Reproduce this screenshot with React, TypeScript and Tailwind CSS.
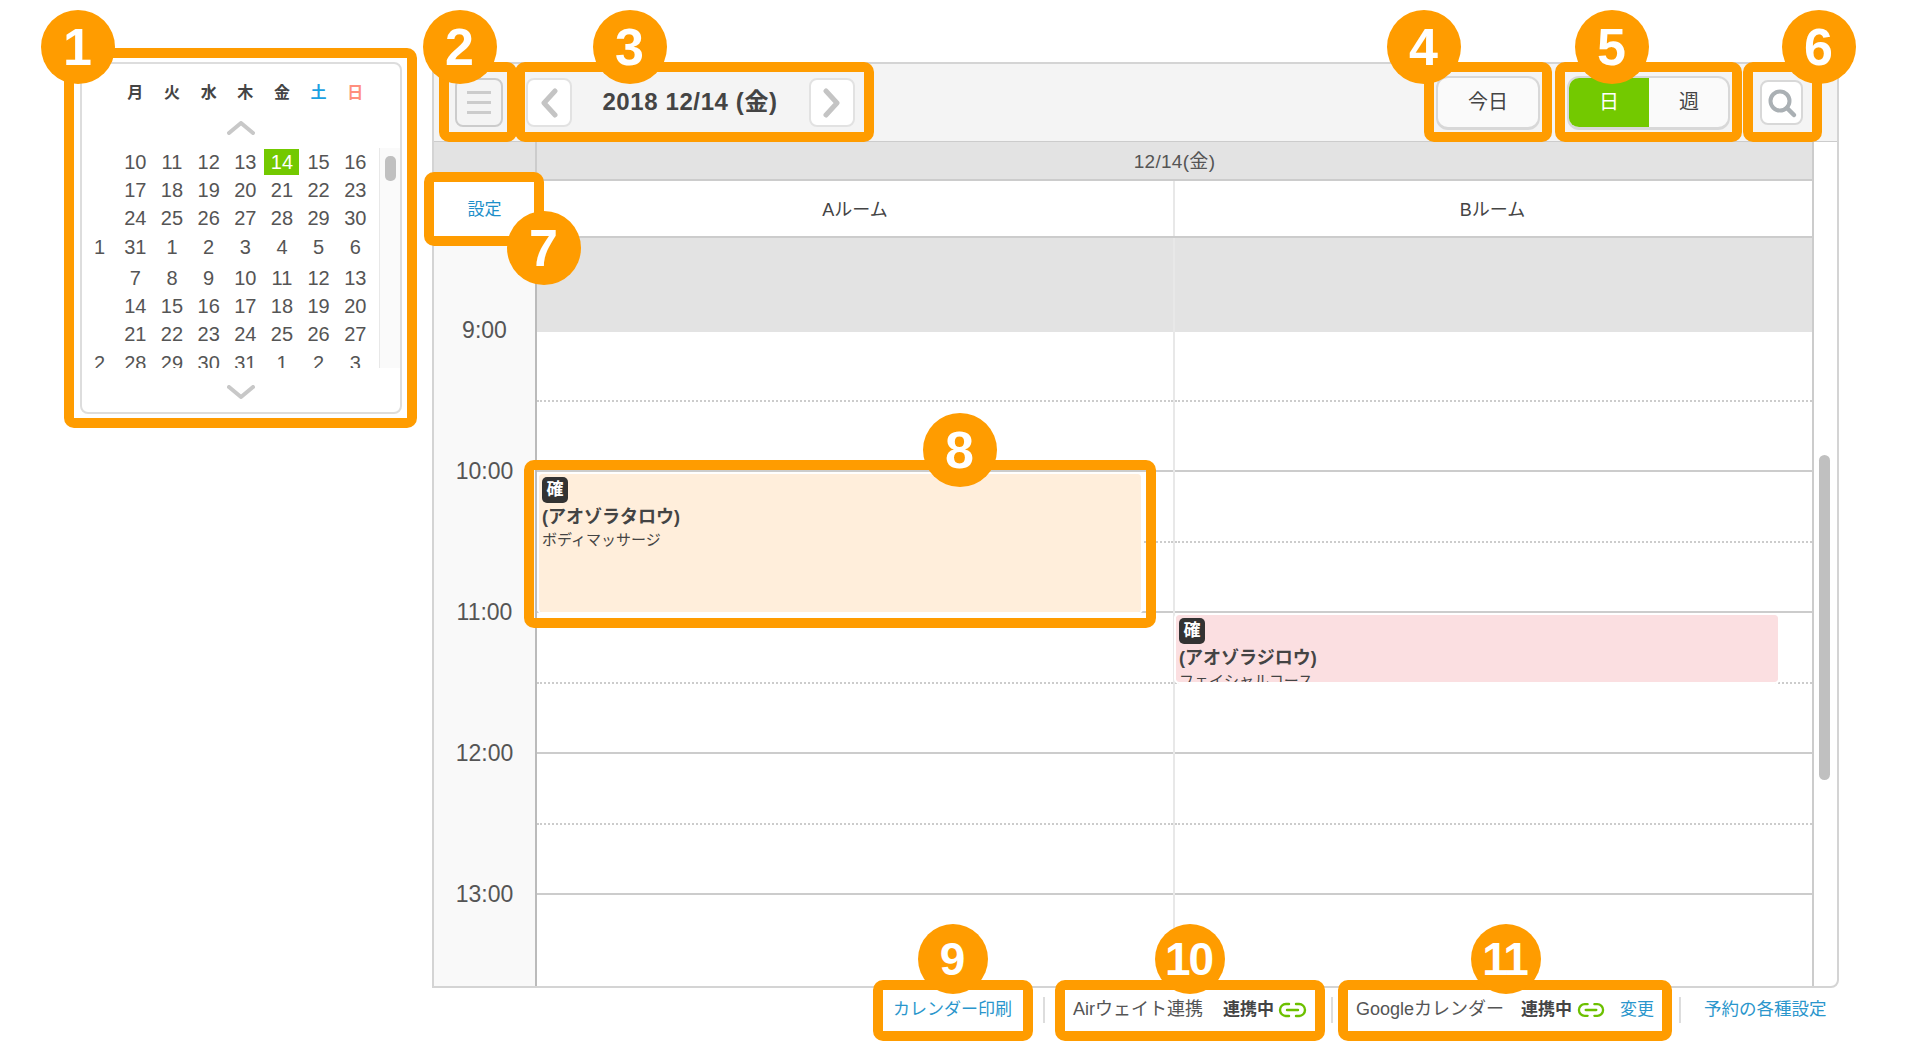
const weekdays = [
  { label: "月", color: "text-[#444]" },
  { label: "火", color: "text-[#444]" },
  { label: "水", color: "text-[#444]" },
  { label: "木", color: "text-[#444]" },
  { label: "金", color: "text-[#444]" },
  { label: "土", color: "text-[#1ba1e2]" },
  { label: "日", color: "text-[#ff8f7e]" },
];

const calendarRows = [
  { week: "", height: "h-[28px]", days: [10, 11, 12, 13, 14, 15, 16] },
  { week: "", height: "h-[28px]", days: [17, 18, 19, 20, 21, 22, 23] },
  { week: "", height: "h-[28px]", days: [24, 25, 26, 27, 28, 29, 30] },
  { week: "1", height: "h-[32px] pb-[2px]", days: [31, 1, 2, 3, 4, 5, 6] },
  { week: "", height: "h-[28px]", days: [7, 8, 9, 10, 11, 12, 13] },
  { week: "", height: "h-[28px]", days: [14, 15, 16, 17, 18, 19, 20] },
  { week: "", height: "h-[28px]", days: [21, 22, 23, 24, 25, 26, 27] },
  { week: "2", height: "h-[30px]", days: [28, 29, 30, 31, 1, 2, 3] },
];

const hours = ["9:00", "10:00", "11:00", "12:00", "13:00"];

function Chevron({ dir }: { dir: "up" | "down" }) {
  return (
    <svg width="28" height="14" viewBox="0 0 28 14" className="mx-auto block">
      <path
        d={dir === "up" ? "M2 12 14 2 26 12" : "M2 2 14 12 26 2"}
        fill="none"
        stroke="#c8c8c8"
        strokeWidth="4"
        strokeLinecap="round"
        strokeLinejoin="round"
      />
    </svg>
  );
}

function MiniCalendar() {
  return (
    <div className="ml-[80px] mt-[62px] w-[322px] h-[352px] shrink-0 border-2 border-[#ddd] rounded-lg">
      <div className="mt-[19px] h-[20px] pl-[35px] flex">
        {weekdays.map((d) => (
          <div key={d.label} className={`w-[36.67px] text-center text-[16px] leading-[20px] font-bold ${d.color}`}>
            {d.label}
          </div>
        ))}
      </div>
      <div className="mt-[18px] h-[14px]">
        <Chevron dir="up" />
      </div>
      <div className="mt-[13px] h-[220px] overflow-hidden flex">
        <div className="w-[297px]">
          {calendarRows.map((row, i) => (
            <div key={i} className={`flex items-center ${row.height}`}>
              <div className="w-[35px] text-center text-[20px] text-[#555]">{row.week}</div>
              {row.days.map((day, j) => (
                <div
                  key={j}
                  className={
                    i === 0 && j === 4
                      ? "w-[35px] mx-[0.83px] h-[26px] leading-[26px] text-center text-[20px] text-white bg-[#73c900]"
                      : "w-[36.67px] text-center text-[20px] text-[#555]"
                  }
                >
                  {day}
                </div>
              ))}
            </div>
          ))}
        </div>
        <div className="flex-1 border-l border-[#e8e8e8] bg-[#fafafa] pt-[8px] pl-[5px]">
          <div className="w-[11px] h-[25px] rounded-[5px] bg-[#c0c0c0]" />
        </div>
      </div>
      <div className="mt-[17px] h-[14px]">
        <Chevron dir="down" />
      </div>
    </div>
  );
}

function NavButton({ dir }: { dir: "prev" | "next" }) {
  return (
    <div className="w-[46px] h-[49px] flex items-center justify-center bg-white border-2 border-[#e2e2e2] rounded-lg">
      <svg width="18" height="30" viewBox="0 0 18 30">
        <path
          d={dir === "prev" ? "M15 3 4 15 15 27" : "M3 3 14 15 3 27"}
          fill="none"
          stroke="#c4c4c4"
          strokeWidth="5"
          strokeLinecap="round"
          strokeLinejoin="round"
        />
      </svg>
    </div>
  );
}

function Toolbar() {
  return (
    <div className="h-[78px] flex items-center bg-[#f4f4f4] border-b border-[#ccc]">
      <div className="ml-[21px] w-[48px] h-[49px] flex flex-col items-center justify-center gap-[7px] border-2 border-[#ccc] rounded-lg">
        <div className="w-[24px] h-[3px] bg-[#ccc]" />
        <div className="w-[24px] h-[3px] bg-[#ccc]" />
        <div className="w-[24px] h-[3px] bg-[#ccc]" />
      </div>
      <div className="ml-[23px]">
        <NavButton dir="prev" />
      </div>
      <div className="w-[237px] pb-[2px] pr-[1px] text-center text-[24px] tracking-[0.6px] font-bold text-[#444]">2018 12/14 (金)</div>
      <NavButton dir="next" />
      <div className="ml-auto w-[104px] h-[54px] flex items-center justify-center bg-[#fafafa] border-2 border-b-[3px] border-[#d8d8d8] rounded-xl text-[20px] text-[#444]">
        今日
      </div>
      <div className="ml-[27px] w-[163px] h-[54px] flex overflow-hidden bg-[#fafafa] border-2 border-b-[3px] border-[#d8d8d8] rounded-xl text-[20px]">
        <div className="w-[80px] flex items-center justify-center bg-[#73c900] text-white">日</div>
        <div className="flex-1 flex items-center justify-center pl-[1px] text-[#444]">週</div>
      </div>
      <div className="ml-[30px] mr-[34px] w-[43px] h-[45px] flex items-center justify-center bg-white border-2 border-[#d8d8d8] rounded-lg">
        <svg width="32" height="32" viewBox="0 0 32 32">
          <circle cx="14" cy="14" r="9.5" fill="none" stroke="#aab0b4" strokeWidth="4" />
          <path d="M21 21 28 28" stroke="#aab0b4" strokeWidth="4.5" strokeLinecap="round" />
        </svg>
      </div>
    </div>
  );
}

function HourRows() {
  return (
    <>
      <div className="h-[94px] bg-[#e3e3e3]" />
      <div className="h-[138px]">
        <div className="h-[70px] border-b-2 border-dotted border-[#ccc]" />
      </div>
      {[0, 1, 2].map((h) => (
        <div key={h} className="h-[141px] border-t-2 border-[#ccc]">
          <div className="h-[71px] border-b-2 border-dotted border-[#ccc]" />
        </div>
      ))}
      <div className="h-[100px] border-t-2 border-[#ccc]" />
    </>
  );
}

function EventCard({
  name,
  menu,
  className,
}: {
  name: string;
  menu: string;
  className: string;
}) {
  return (
    <div className={`absolute overflow-hidden rounded-[3px] pl-[3px] pt-[3px] outline-2 outline-white ${className}`}>
      <div className="w-[26px] h-[26px] rounded-[5px] bg-[#333] text-white text-[17px] font-bold leading-[26px] text-center">
        確
      </div>
      <div className="mt-[4px] text-[18px] leading-[20px] font-bold text-[#444] whitespace-nowrap">{name}</div>
      <div className="mt-[3px] text-[15px] leading-[20px] text-[#444] whitespace-nowrap">{menu}</div>
    </div>
  );
}

function Schedule() {
  return (
    <div className="flex-1 min-h-0 flex">
      <div className="w-[1380px] flex flex-col">
        <div className="h-[39px] grid grid-cols-[103px_1275px] bg-[#e3e3e3] border-b-2 border-[#ccc] border-r-2">
          <div className="border-r-2 border-[#ccc]" />
          <div className="text-center text-[19px] tracking-[0.3px] leading-[39px] text-[#555]">12/14(金)</div>
        </div>
        <div className="h-[57px] grid grid-cols-[103px_638px_639px] border-b-2 border-[#ccc] text-[18px] text-[#444]">
          <div className="flex items-center justify-center pt-[3px] text-[17px] text-[#1d8fc9] border-r-2 border-[#ccc]">設定</div>
          <div className="flex items-center justify-center pt-[3px] border-r-2 border-[#e8e8e8]">Aルーム</div>
          <div className="flex items-center justify-center pt-[3px] pr-[2px] border-r-2 border-[#ccc]">Bルーム</div>
        </div>
        <div className="flex-1 min-h-0 overflow-hidden grid grid-cols-[103px_638px_639px]">
          <div className="pt-[22px] bg-[#f9f9f9] border-r-2 border-[#bbb]">
            {hours.map((h) => (
              <div key={h} className="h-[141px] flex items-center justify-center text-[23px] text-[#555]">
                {h}
              </div>
            ))}
          </div>
          <div className="relative border-r-2 border-[#e8e8e8]">
            <HourRows />
            <EventCard
              name="(アオゾラタロウ)"
              menu="ボディマッサージ"
              className="left-[2px] top-[236px] w-[602px] h-[138px] bg-[#ffeedb]"
            />
          </div>
          <div className="relative border-r-2 border-[#ccc]">
            <HourRows />
            <EventCard
              name="(アオゾラジロウ)"
              menu="フェイシャルコース"
              className="left-[1px] top-[377px] w-[602px] h-[67px] bg-[#fbdfe1]"
            />
          </div>
        </div>
      </div>
      <div className="flex-1 pt-[313px] pl-[5px]">
        <div className="w-[11px] h-[325px] rounded-[6px] bg-[#c0c0c0]" />
      </div>
    </div>
  );
}

function LinkIcon({ width }: { width: number }) {
  return (
    <svg width={width} height="16" viewBox="0 0 29 16" className="ml-[4px]">
      <path
        d="M11 2H8a6 6 0 0 0 0 12h3M18 2h3a6 6 0 0 1 0 12h-3M9 8h11"
        fill="none"
        stroke="#6cc000"
        strokeWidth="2.4"
        strokeLinecap="round"
      />
    </svg>
  );
}

function Separator({ className }: { className: string }) {
  return <div className={`w-[2px] h-[26px] bg-[#ddd] ${className}`} />;
}

function Footer() {
  return (
    <div className="h-[43px] flex items-center pl-[461px] text-[17px] whitespace-nowrap">
      <div className="w-[120px] text-[#2a96cc]">カレンダー印刷</div>
      <Separator className="ml-[30px]" />
      <div className="ml-[28px] w-[150px] text-[18px] text-[#555]">Airウェイト連携</div>
      <div className="w-[51px] font-bold text-[#444]">連携中</div>
      <LinkIcon width={29} />
      <Separator className="ml-[24px]" />
      <div className="ml-[23px] w-[165px] text-[18px] text-[#555]">Googleカレンダー</div>
      <div className="w-[52px] font-bold text-[#444]">連携中</div>
      <LinkIcon width={28} />
      <div className="ml-[15px] w-[35px] text-[#2a96cc]">変更</div>
      <Separator className="ml-[24px]" />
      <div className="ml-[23px] text-[17.5px] text-[#2a96cc]">予約の各種設定</div>
    </div>
  );
}

// numbered callouts that sit on top of the screenshot
const calloutBoxes = [
  "left-[64px] top-[48px] w-[353px] h-[380px]",
  "left-[439px] top-[62px] w-[78px] h-[80px]",
  "left-[515px] top-[62px] w-[359px] h-[80px]",
  "left-[1424px] top-[62px] w-[128px] h-[80px]",
  "left-[1555px] top-[62px] w-[187px] h-[80px]",
  "left-[1743px] top-[62px] w-[79px] h-[80px]",
  "left-[424px] top-[172px] w-[120px] h-[74px]",
  "left-[524px] top-[460px] w-[632px] h-[168px]",
  "left-[873px] top-[980px] w-[160px] h-[61px]",
  "left-[1055px] top-[980px] w-[270px] h-[61px]",
  "left-[1338px] top-[980px] w-[334px] h-[61px]",
];

const calloutBadges = [
  { n: "1", pos: "left-[41px] top-[10px] w-[74px] h-[74px] text-[52px]" },
  { n: "2", pos: "left-[423px] top-[10px] w-[74px] h-[74px] text-[52px]" },
  { n: "3", pos: "left-[593px] top-[10px] w-[74px] h-[74px] text-[52px]" },
  { n: "4", pos: "left-[1387px] top-[10px] w-[74px] h-[74px] text-[52px]" },
  { n: "5", pos: "left-[1575px] top-[10px] w-[74px] h-[74px] text-[52px]" },
  { n: "6", pos: "left-[1782px] top-[10px] w-[74px] h-[74px] text-[52px]" },
  { n: "7", pos: "left-[507px] top-[211px] w-[74px] h-[74px] text-[52px]" },
  { n: "8", pos: "left-[923px] top-[413px] w-[74px] h-[74px] text-[52px]" },
  { n: "9", pos: "left-[918px] top-[924px] w-[70px] h-[70px] text-[46px]" },
  { n: "10", pos: "left-[1155px] top-[924px] w-[70px] h-[70px] text-[46px]" },
  { n: "11", pos: "left-[1471px] top-[924px] w-[70px] h-[70px] text-[46px]" },
];

function Callouts() {
  return (
    <>
      {calloutBoxes.map((pos) => (
        <div key={pos} className={`absolute border-[10px] border-[#ff9c00] rounded-[10px] ${pos}`} />
      ))}
      {calloutBadges.map((b) => (
        <div
          key={b.n}
          className={`absolute flex items-center justify-center pr-[3px] rounded-full bg-[#ff9c00] text-white font-bold tracking-[-2px] ${b.pos}`}
        >
          {b.n}
        </div>
      ))}
    </>
  );
}

export default function App() {
  return (
    <div className="relative w-[1920px] h-[1046px] overflow-hidden bg-white flex font-['Liberation_Sans','Noto_Sans_CJK_JP',sans-serif]">
      <MiniCalendar />
      <div className="ml-[30px] w-[1407px] flex flex-col">
        <div className="mt-[62px] h-[926px] flex flex-col border-2 border-[#d4d4d4] rounded-br-lg rounded-tr-sm overflow-hidden">
          <Toolbar />
          <Schedule />
        </div>
        <Footer />
      </div>
      <Callouts />
    </div>
  );
}
